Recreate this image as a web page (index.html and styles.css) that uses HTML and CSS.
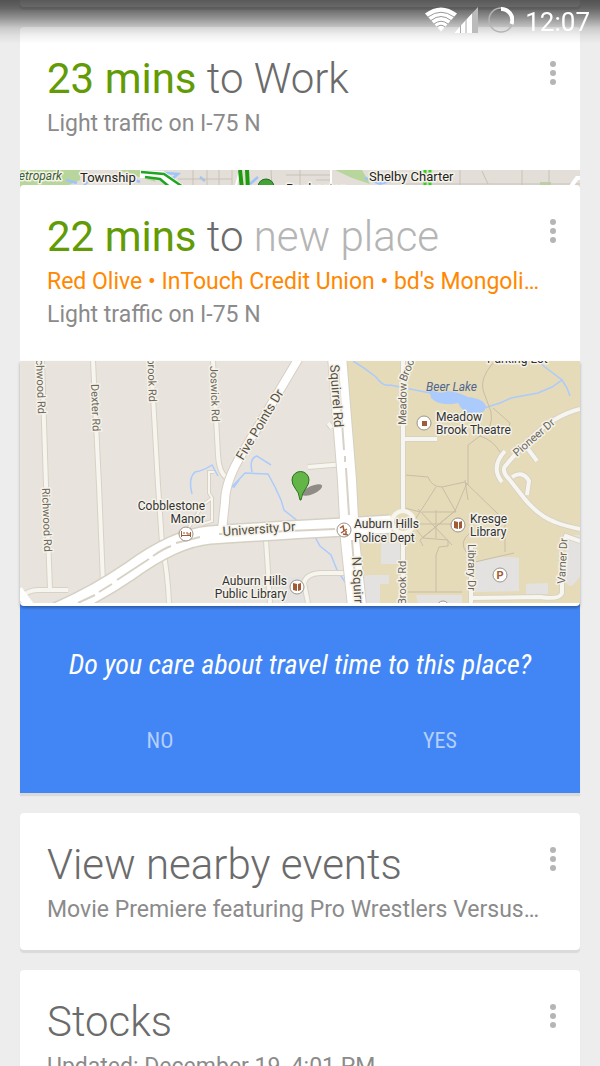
FILE: index.html
```html
<!DOCTYPE html>
<html lang="en">

<head>
  <meta charset="utf-8">
  <meta name="viewport" content="width=device-width, initial-scale=1">
  <title>Now</title>
  <link rel="stylesheet" href="styles.css">
</head>

<body>
  <header class="status-bar">
    <svg class="status-wifi" viewBox="0 0 32 24" aria-hidden="true">
      <path d="M0 6 Q16 -6 32 6 L16 24 Z" fill="#fff"/>
      <g fill="none" stroke="#999" stroke-width="1">
        <path d="M3 9.500 Q16 0 29 9.500"/>
        <path d="M6 13 Q16 5 26 13"/>
        <path d="M9 16.500 Q16 11 23 16.500"/>
        <path d="M12 19.500 Q16 16 20 19.500"/>
      </g>
    </svg>
    <svg class="status-signal" viewBox="0 0 24 26" aria-hidden="true">
      <path d="M0 26 L24 0 V26 Z" fill="#bbb"/>
      <path d="M0 26 L18 6.500 V26 Z" fill="#fff"/>
      <path d="M6.500 18 V26 M12 12 V26" stroke="#aaa" stroke-width="1"/>
    </svg>
    <svg class="status-battery" viewBox="0 0 26 26" aria-hidden="true">
      <circle cx="13" cy="13" r="12" fill="none" stroke="#b5b5b5" stroke-width="1.500"/>
      <path d="M13 2 A11 11 0 0 1 23.500 17" fill="none" stroke="#fff" stroke-width="4"/>
    </svg>
    <time>12:07</time>
  </header>

  <main class="feed">
    <div class="card card-previous"></div>

    <div class="stack">
      <article class="card travel">
        <div class="title-row">
          <h2><b>23 mins</b> to Work</h2>
          <button type="button" class="menu" aria-label="Card options"><i></i><i></i><i></i></button>
        </div>
        <p>Light traffic on I-75 N</p>
      </article>
      <div class="map-strip">
        <svg viewBox="20 170 560 19" role="img" aria-label="Map of the way to work">
          <rect x="20" y="170" width="560" height="19" fill="#e3dfd8"/>
          <path d="M20 170 H80 V180 L60 189 H20 Z M118 170 H148 L156 182 L142 178 Z M335 170 H362 L370 184 L352 178 Z M540 182 H551 V189 H540 Z" fill="#b8d69b"/>
          <path d="M66 180 L77 183 M84 185 L92 178 M126 176 L140 182 M154 172 L178 174 L171 180 M200 177 L205 181 M258 177 L250 184 M365 178 L381 184 M378 184 L391 181" stroke="#9fc3fb" stroke-width="2.500" fill="none"/>
          <path d="M178 179 H232 M193 170 V189 M207 170 V189 M219 170 V189 M232 170 V189 M271 170 L272 189 M286 175 H330 M300 170 V189 M316 180 H332 M400 184 H580 M482 171 L488 184 M522 170 V189 M549 170 V189 M460 170 V189" stroke="#c7c1b8" fill="none"/>
          <path d="M331 170 V189 M240 170 L235 189" stroke="#fff" stroke-width="2" fill="none"/>
          <path d="M140 174 L162 175 L182 189" stroke="#fff" stroke-width="8" fill="none"/>
          <path d="M141 172 L164 174 L183 187 M145 177 L160 179 L172 189" stroke="#1fa51f" stroke-width="2.500" fill="none"/>
          <path d="M240 170 L242 189 M247 170 L248 189" stroke="#1f9c0e" stroke-width="4" fill="none"/>
          <path d="M425 170 V189 M430 170 V189" stroke="#2bd31b" stroke-width="3" stroke-dasharray="5 1"/>
          <circle cx="266" cy="187" r="8" fill="#43a339" stroke="#236b1d"/>
          <path d="M570 188 L577 178 H580" stroke="#fff" stroke-width="4" fill="none"/>
          <g class="label label-strong">
            <text x="62" y="180" text-anchor="end" class="label-park">Metropark</text>
            <text x="80" y="182">Township</text>
            <text x="369" y="181">Shelby Charter</text>
            <text x="286" y="193">Rochester</text>
          </g>
        </svg>
      </div>

      <article class="card travel">
        <div class="title-row">
          <h2><b>22 mins</b> to <span class="faded">new place</span></h2>
          <button type="button" class="menu" aria-label="Card options"><i></i><i></i><i></i></button>
        </div>
        <p class="places">Red Olive • InTouch Credit Union • bd's Mongoli…</p>
        <p>Light traffic on I-75 N</p>
      </article>
      <div class="map">
        <svg viewBox="20 361 560 242" role="img" aria-label="Map around University Dr and Squirrel Rd">
          <rect x="20" y="361" width="560" height="242" fill="#e8e4dd"/>
          <path d="M345 361 H580 V603 H362 Z" fill="#e6dbb9"/>

          <!-- parking lots and blocks -->
          <path d="M381 543 H402 V564 H381 Z M369 575 H389 V584 H380 V603 H364 V576 Z M476 562 Q498 555 519 558 V591 L476 592 Z M526 584 L548 583 V594 H526 Z M566 535 H580 V576 Q570 592 566 582 Z M416 595 H462 V603 H418 Z M285 577 H306 V603 H280 Z" fill="#e3e2e0"/>
          <path d="M429 389 Q440 395 448 391 Q458 392 468 397 Q485 399 486 407 Q484 416 470 414 Q462 411 458 403 Q440 407 431 398 Z" fill="#abcbfd"/>

          <!-- creeks -->
          <g fill="none" stroke="#abcbfd" stroke-width="1.500">
            <path d="M390 385 L430 393 M353 361 Q365 368 376 377 Q383 387 390 385"/>
            <path d="M484 408 L500 403 L511 398 L538 393 L552 387 L562 380 L541 364 M562 380 L567 388 L570 396"/>
            <path d="M192 494 Q188 478 195 472 Q203 471 212 465 L218 476"/>
            <path d="M230 489 L245 473 L268 474 L275 487 L281 500 L284 510 L299 522 L315 537 L320 546 L331 555 L337 570 L347 585"/>
            <path d="M252 472 Q249 458 257 456 L271 465 M230 483 L234 487 L239 480"/>
          </g>

          <!-- campus paths -->
          <g fill="none" stroke="#c9bda5" stroke-width="1">
            <path d="M493 363 Q480 378 483 390 L491 412 Q494 428 480 436 L468 445 V485 M493 408 L510 423 Q510 430 495 436 M480 436 Q493 440 500 452"/>
            <path d="M405 475 L428 477 Q432 487 442 487 L465 482 L498 514 L505 520 V552 M475 562 L514 553"/>
            <path d="M436 487 L420 512 L405 508 M442 487 L456 512 M467 483 L455 511 L420 540 L423 546 M422 512 H456 M411 524 H465 M418 509 L452 545 M436 510 V538 M456 510 L422 538 M420 512 L412 524 L423 538 L448 540 V546 L439 547 L436 555 V592 M405 592 H462 M465 480 L468 500 M470 533 Q458 542 467 553"/>
          </g>

          <!-- minor roads -->
          <g class="road-edge">
            <path d="M42 361 L46 485 L50 589 M68 590 H38 Q28 590 20 598 M93 361 L99 485 L103 583 M151 361 L158 485 L162 543 Q168 575 169 603 M213 361 L218 455 Q219 473 227 478 M308 467 L345 464 M328 423 L332 428 M403 361 V603 M403 439 H437 M266 540 L270 603 M346 573 H320 Q306 574 304 583 L308 603 M471 545 V603 M470 598 L540 597 Q560 600 562 593 L562 562 M562 545 L566 536 L580 541"/>
            <path d="M580 409 Q553 416 530 439 Q515 454 507 464 Q500 470 509 479 L520 493 Q536 515 555 522 Q565 526 580 529 M505 451 Q490 467 502 482 M512 477 Q523 470 529 481 L527 495 M528 449 L537 461"/>
            <path d="M214 472 H209 V493 L212 498 L203 505 L186 532 M212 498 V521 L202 524" stroke-width="4"/>
          </g>
          <g class="road">
            <path d="M42 361 L46 485 L50 589 M68 590 H38 Q28 590 20 598 M93 361 L99 485 L103 583 M151 361 L158 485 L162 543 Q168 575 169 603 M213 361 L218 455 Q219 473 227 478 M308 467 L345 464 M328 423 L332 428 M403 361 V603 M403 439 H437 M266 540 L270 603 M346 573 H320 Q306 574 304 583 L308 603 M471 545 V603 M470 598 L540 597 Q560 600 562 593 L562 562 M562 545 L566 536 L580 541"/>
            <path d="M580 409 Q553 416 530 439 Q515 454 507 464 Q500 470 509 479 L520 493 Q536 515 555 522 Q565 526 580 529 M505 451 Q490 467 502 482 M512 477 Q523 470 529 481 L527 495 M528 449 L537 461"/>
            <path d="M214 472 H209 V493 L212 498 L203 505 L186 532 M212 498 V521 L202 524" stroke-width="2"/>
          </g>
          <circle cx="403" cy="522" r="11" fill="#e6dbb9" stroke="#f7f5ef" stroke-width="4"/>

          <!-- main roads -->
          <g fill="none" stroke="#d5d0c3">
            <path d="M300 356 L243 452 Q225 481 225 502 L222 530" stroke-width="10"/>
            <path d="M56 612 Q95 595 130 571 Q175 538 210 535 Q270 531 345 527 L390 524" stroke-width="20"/>
            <path d="M337 356 L347 480 L350 540 L357 606" stroke-width="20"/>
          </g>
          <path d="M18 590 L30 606" stroke="#fff" stroke-width="9"/>
          <g fill="none" stroke="#fff">
            <path d="M300 356 L243 452 Q225 481 225 502 L222 530" stroke-width="8"/>
            <path d="M56 612 Q95 595 130 571 Q175 538 210 535 Q270 531 345 527 L391 524" stroke-width="17"/>
            <path d="M337 356 L347 480 L350 540 L357 606" stroke-width="18"/>
          </g>
          <g fill="none" stroke="#d8d2c6" stroke-width="2">
            <path d="M78 603 L95 595 M99 592 L112 584 M117 580 L149 559 M153 556 Q163 549 171 546 M176 543 L200 537 M219 534 L335 529"/>
            <path d="M338 365 L344 450 M345 456 V462 M346 468 L349 515 M352 540 L357 603"/>
          </g>

          <!-- destination pin -->
          <ellipse cx="312" cy="490" rx="11" ry="4" fill="#8f8c86" transform="rotate(-24 312 490)"/>
          <path d="M300 500 Q299 492 295 488 Q292 484 292 480 A8.500 8.500 0 0 1 309 480 Q309 484 306 488 Q302 493 301 500 Z" fill="#62b546" stroke="#2d6f20" stroke-width="1"/>

          <!-- points of interest -->
          <g fill="#fff" stroke="#9b948a">
            <circle cx="424" cy="423" r="7"/>
            <circle cx="186" cy="534" r="7"/>
            <circle cx="344" cy="530" r="7"/>
            <circle cx="458" cy="525" r="7"/>
            <circle cx="297" cy="587" r="7"/>
            <circle cx="500" cy="575" r="7"/>
            <circle cx="443" cy="607" r="6"/>
          </g>
          <g fill="#a15c35">
            <path d="M422 421 h5 v5 h-5 Z"/>
            <path d="M454 521 l4 1 v7 l-4 -1 Z M459 522 l3 -1 v7 l-3 1 Z M293 583 l4 1 v7 l-4 -1 Z M298 584 l3 -1 v7 l-3 1 Z"/>
          </g>
          <path d="M181.500 531 V537 M181.500 535.500 H190.500 M190.500 532 V537 M183 533 H185 M187 532 V534 H190" stroke="#a15c35" fill="none"/>
          <path d="M340 528 L343 526 L344 531 M341 533 L347 529 M346 531 V535 M343 534 L348 535" stroke="#a15c35" stroke-width="1.500" fill="none"/>
          <text x="500" y="579" font-size="11" font-weight="700" fill="#a15c35" text-anchor="middle">P</text>

          <g class="label">
            <text x="205" y="510" text-anchor="end">Cobblestone</text>
            <text x="205" y="523" text-anchor="end">Manor</text>
            <text x="436" y="421">Meadow</text>
            <text x="436" y="434">Brook Theatre</text>
            <text x="354" y="528">Auburn Hills</text>
            <text x="354" y="542">Police Dept</text>
            <text x="470" y="523">Kresge</text>
            <text x="470" y="536">Library</text>
            <text x="287" y="585" text-anchor="end">Auburn Hills</text>
            <text x="287" y="598" text-anchor="end">Public Library</text>
            <text x="487" y="363">Parking Lot</text>
          </g>
          <g class="label label-street">
            <text transform="translate(38 414) rotate(88)" text-anchor="end">Birchwood Rd</text>
            <text transform="translate(91 384) rotate(88)">Dexter Rd</text>
            <text transform="translate(149 402) rotate(88)" text-anchor="end">Millbrook Rd</text>
            <text transform="translate(210 366) rotate(88)">Joswick Rd</text>
            <text transform="translate(42 488) rotate(88)">Richwood Rd</text>
            <text transform="translate(406 425) rotate(-89)">Meadow</text>
            <text transform="translate(406 382) rotate(-68)">Brook</text>
            <text transform="translate(517 457) rotate(-41)">Pioneer Dr</text>
            <text transform="translate(406 605) rotate(-90)">Brook Rd</text>
            <text transform="translate(468 544) rotate(90)">Library Dr</text>
            <text transform="translate(565 584) rotate(-87)">Varner Dr</text>
          </g>
          <g class="label label-road">
            <text transform="translate(243 461) rotate(-59)">Five Points Dr</text>
            <text transform="translate(330 365) rotate(86)">Squirrel Rd</text>
            <text transform="translate(223 536) rotate(-4)">University Dr</text>
            <text transform="translate(352 557) rotate(87)">N Squirrel Rd</text>
          </g>
          <text class="label-water" x="426" y="391">Beer Lake</text>
        </svg>
      </div>

      <section class="question">
        <p>Do you care about travel time to this place?</p>
        <div class="answers">
          <button type="button">NO</button>
          <button type="button">YES</button>
        </div>
      </section>
    </div>

    <article class="card">
      <div class="title-row">
        <h2>View nearby events</h2>
        <button type="button" class="menu" aria-label="Card options"><i></i><i></i><i></i></button>
      </div>
      <p>Movie Premiere featuring Pro Wrestlers Versus…</p>
    </article>

    <article class="card">
      <div class="title-row">
        <h2>Stocks</h2>
        <button type="button" class="menu" aria-label="Card options"><i></i><i></i><i></i></button>
      </div>
      <p>Updated: December 19, 4:01 PM</p>
    </article>
  </main>
</body>

</html>
```
FILE: styles.css
```css
* {
  box-sizing: border-box;
}

body {
  margin: 0;
  height: 100vh;
  overflow: hidden;
  background: #ededed;
  font-family: Roboto, "Liberation Sans", sans-serif;
  color: #6b6b6b;
}

h2, p {
  margin: 0;
  white-space: nowrap;
}

button {
  border: 0;
  padding: 0;
  background: none;
  font-family: inherit;
  cursor: pointer;
}

/* lies over the scrolled cards */
.status-bar {
  position: fixed;
  top: 0;
  left: 0;
  right: 0;
  z-index: 2;
  display: flex;
  align-items: flex-start;
  justify-content: flex-end;
  height: 44px;
  padding: 7px 10px 0 0;
  background: linear-gradient(rgba(0, 0, 0, 0.65), rgba(0, 0, 0, 0.58) 8px, rgba(0, 0, 0, 0.38) 18px, rgba(0, 0, 0, 0.15) 28px, rgba(0, 0, 0, 0.05) 36px, transparent);
  color: #fff;
}

.status-bar time {
  margin-left: 11px;
  font-size: 26px;
  line-height: 30px;
}

.status-wifi {
  width: 32px;
  height: 25px;
}

.status-signal {
  width: 24px;
  height: 26px;
  margin-left: -3px;
}

.status-battery {
  width: 26px;
  height: 26px;
  margin-left: 10px;
}

.feed {
  display: flex;
  flex-direction: column;
  gap: 20px;
  padding: 0 20px;
}

.card {
  padding: 28px 27px 24px;
  background: #fff;
  border-radius: 4px;
  box-shadow: 0 3px 1px #dadada;
}

.card-previous {
  height: 7px;
  padding: 0;
  border-radius: 0 0 4px 4px;
}

.card.travel {
  position: relative;
  padding-bottom: 30px;
  border-radius: 4px 4px 0 0;
  box-shadow: none;
}

.card p {
  font-size: 23px;
  line-height: 33px;
  color: #8b8b8b;
  overflow: hidden;
  text-overflow: ellipsis;
}

.card .places {
  color: #ff8800;
}

.title-row {
  display: flex;
  justify-content: space-between;
  margin: 0 -10px 4px 0;
}

.title-row h2 {
  font-size: 42px;
  font-weight: 300;
  line-height: 48px;
}

.title-row b {
  font-weight: 400;
  color: #629b05;
}

.title-row .faded {
  color: #b5b5b5;
}

.menu {
  display: flex;
  flex-direction: column;
  align-items: center;
  justify-content: center;
  gap: 3px;
  width: 20px;
  height: 36px;
}

.menu i {
  width: 6px;
  height: 6px;
  border-radius: 50%;
  background: #b5b5b5;
}

/* the next card covers the lower edge of the strip */
.map-strip {
  height: 15px;
}

.map-strip svg,
.map svg {
  display: block;
  width: 100%;
}

.map {
  position: relative;
  padding-bottom: 3px;
  background: #fff;
  border-radius: 0 0 4px 4px;
  box-shadow: 0 2px 3px rgba(0, 0, 0, 0.3);
}

.road-edge {
  fill: none;
  stroke: #d8d2c4;
  stroke-width: 6;
}

.road {
  fill: none;
  stroke: #f7f5ef;
  stroke-width: 4;
}

.label {
  font-size: 12px;
  fill: #333;
  stroke: #f5f2ea;
  stroke-width: 3px;
  stroke-linejoin: round;
  paint-order: stroke;
}

.label-strong {
  font-size: 13px;
  fill: #222;
}

.label-park {
  font-size: 12px;
  font-style: italic;
  fill: #38612e;
}

.label-street {
  font-size: 11px;
  fill: #6b6658;
}

.label-road {
  font-size: 13px;
  fill: #555043;
}

.label-water {
  font-size: 12px;
  font-style: italic;
  fill: #4f6690;
}

.question {
  margin-top: -3px;
  padding: 38px 0 28px;
  background: #4286f5;
  box-shadow: 0 3px 1px #dadada;
  font-family: "Roboto Condensed", "Liberation Sans Narrow", Roboto, sans-serif;
  text-align: center;
}

.question p {
  font-size: 28px;
  font-style: italic;
  line-height: 48px;
  color: #fff;
}

.answers {
  display: flex;
  margin-top: 28px;
}

.answers button {
  flex: 1;
  font-size: 22px;
  line-height: 48px;
  color: #b3cffb;
}
```
